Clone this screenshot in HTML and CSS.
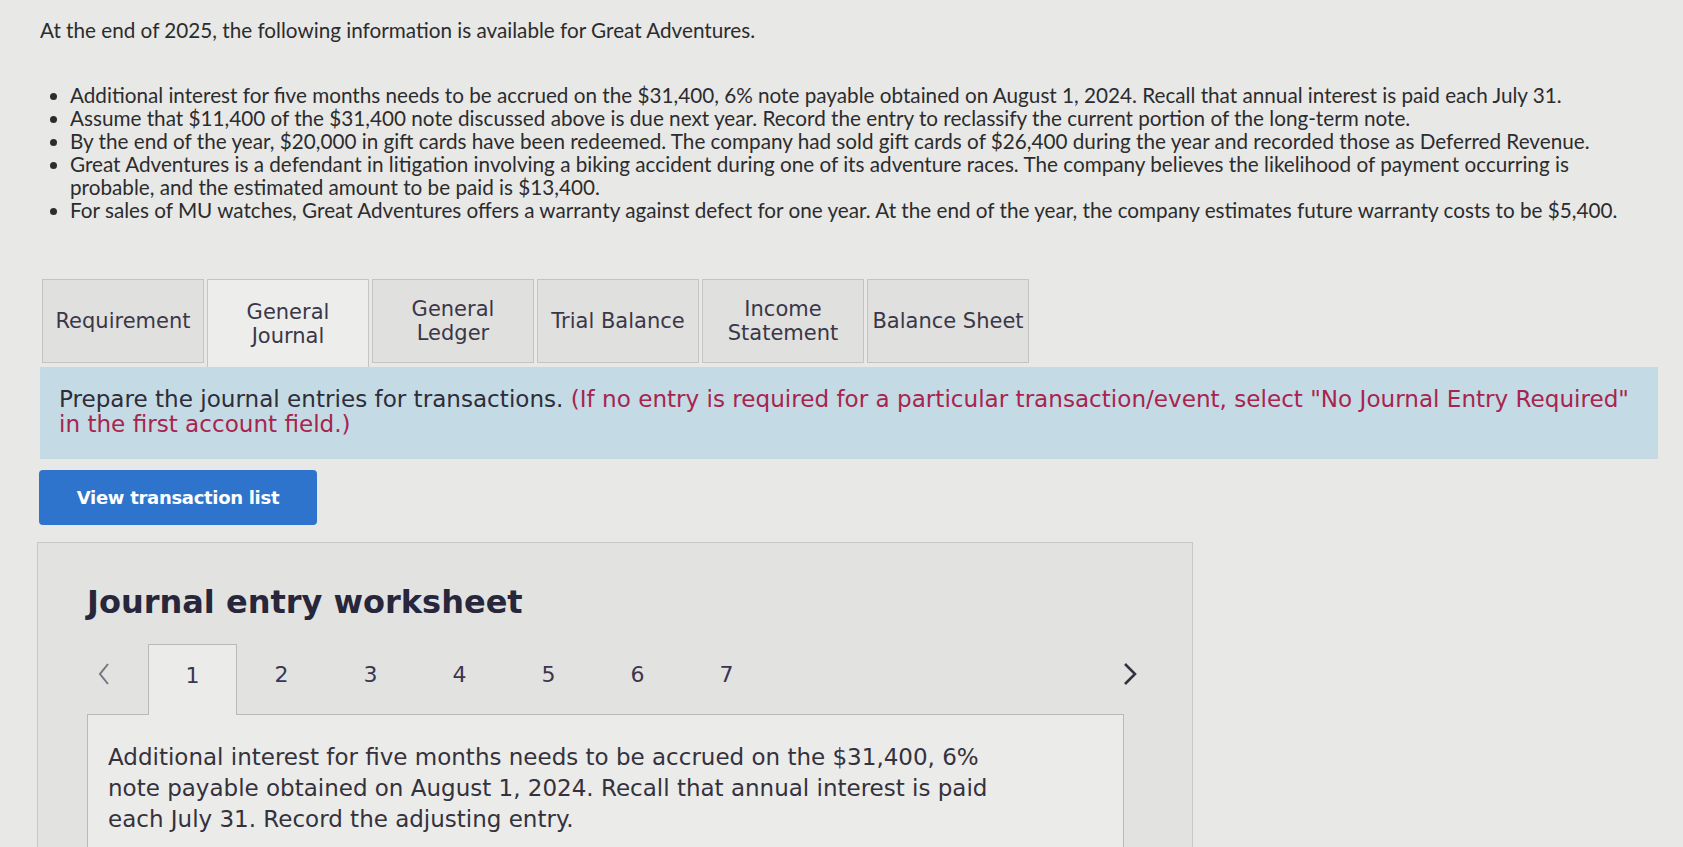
FILE: index.html
```html
<!DOCTYPE html>
<html lang="en">
<head>
<meta charset="utf-8">
<title>Great Adventures</title>
<link rel="stylesheet" href="styles.css">
</head>
<body>
<div class="intro">
  <p class="lead">At the end of 2025, the following information is available for Great Adventures.</p>
  <ul class="facts">
    <li>Additional interest for five months needs to be accrued on the $31,400, 6% note payable obtained on August 1, 2024. Recall that annual interest is paid each July 31.</li>
    <li>Assume that $11,400 of the $31,400 note discussed above is due next year. Record the entry to reclassify the current portion of the long-term note.</li>
    <li>By the end of the year, $20,000 in gift cards have been redeemed. The company had sold gift cards of $26,400 during the year and recorded those as Deferred Revenue.</li>
    <li>Great Adventures is a defendant in litigation involving a biking accident during one of its adventure races. The company believes the likelihood of payment occurring is probable, and the estimated amount to be paid is $13,400.</li>
    <li>For sales of MU watches, Great Adventures offers a warranty against defect for one year. At the end of the year, the company estimates future warranty costs to be $5,400.</li>
  </ul>
</div>

<div class="tabs">
  <div class="tab">Requirement</div>
  <div class="tab active">General<br>Journal</div>
  <div class="tab">General<br>Ledger</div>
  <div class="tab">Trial Balance</div>
  <div class="tab">Income<br>Statement</div>
  <div class="tab">Balance Sheet</div>
</div>

<div class="instructions">
  <span>Prepare the journal entries for transactions.</span> <span class="note">(If no entry is required for a particular transaction/event, select "No Journal Entry Required"</span><br><span class="note">in the first account field.)</span>
</div>

<button class="view-btn" type="button">View transaction list</button>

<section class="worksheet">
  <h2 class="ws-title">Journal entry worksheet</h2>
  <div class="ws-nav">
    <span class="arrow prev"><svg width="12" height="24" viewBox="0 0 12 24"><polyline points="10,2 2,12 10,22" fill="none" stroke="#77737f" stroke-width="2"/></svg></span>
    <span class="step current">1</span>
    <span class="step">2</span>
    <span class="step">3</span>
    <span class="step">4</span>
    <span class="step">5</span>
    <span class="step">6</span>
    <span class="step">7</span>
    <span class="arrow next"><svg width="14" height="24" viewBox="0 0 14 24"><polyline points="2,2 12,12 2,22" fill="none" stroke="#35323f" stroke-width="2.6"/></svg></span>
  </div>
  <div class="ws-body">
    <p class="ws-text">Additional interest for five months needs to be accrued on the $31,400, 6% note payable obtained on August 1, 2024. Recall that annual interest is paid each July 31. Record the adjusting entry.</p>
  </div>
</section>
</body>
</html>
```

FILE: styles.css
```css
* { box-sizing: border-box; }

html, body {
  margin: 0;
  height: 100%;
  overflow: hidden;
}

body {
  background: #e8e8e6;
  color: #2e2e32;
  padding: 0 25px 0 40px;
  font-family: "DejaVu Sans", Verdana, sans-serif;
}

.intro {
  font-family: Lato, "Liberation Sans", sans-serif;
  font-size: 20.7px;
  line-height: 23px;
  color: #2c2c2e;
  padding-top: 19px;
}

.lead {
  margin: 0;
}

.facts {
  margin: 42px 0 0 0;
  padding-left: 30px;
  padding-right: 20px;
}

.tabs {
  display: flex;
  gap: 3px;
  margin: 57px 0 0 2px;
  align-items: flex-start;
}

.tab {
  width: 162px;
  height: 84px;
  background: #e0e0df;
  border: 1px solid #c4c4c4;
  display: flex;
  align-items: center;
  justify-content: center;
  text-align: center;
  font-size: 21px;
  line-height: 24px;
  color: #3b3748;
}

.tab.active {
  background: #ededec;
  height: 88px;
  border-bottom: none;
}

.instructions {
  width: 1618px;
  background: #c4dbe5;
  padding: 20px 19px 22px 19px;
  font-size: 23.1px;
  line-height: 25px;
  color: #2f2d38;
}

.note {
  color: #a8244f;
}

.view-btn {
  display: block;
  margin: 11px 0 0 -1px;
  width: 278px;
  height: 55px;
  border: none;
  border-radius: 4px;
  background: #2e74cd;
  color: #ffffff;
  font-family: "DejaVu Sans", Verdana, sans-serif;
  font-weight: bold;
  font-size: 18px;
  letter-spacing: -0.3px;
}

.worksheet {
  margin: 17px 0 0 -3px;
  width: 1156px;
  height: 400px;
  background: #e2e2e1;
  border: 1px solid #c8c8c8;
  padding: 40px 0 0 21px;
}

.ws-title {
  margin: 0 0 0 28px;
  font-size: 32px;
  line-height: 38px;
  font-weight: bold;
  color: #28263a;
}

.ws-nav {
  display: flex;
  align-items: stretch;
  height: 70px;
  margin-top: 23px;
  width: 1115px;
}

.step, .arrow {
  width: 89px;
  display: flex;
  align-items: center;
  justify-content: center;
  font-size: 22px;
  color: #3a3650;
  padding-bottom: 10px;
}

.step.current {
  background: #ebebea;
  border: 1px solid #b9b9b9;
  border-bottom: none;
  position: relative;
  z-index: 1;
  margin-bottom: -1px;
}

.arrow.next {
  margin-left: auto;
}

.ws-body {
  margin-left: 28px;
  width: 1037px;
  height: 200px;
  background: #ebebea;
  border: 1px solid #b9b9b9;
  padding: 27px 0 0 20px;
}

.ws-text {
  margin: 0;
  width: 900px;
  font-size: 23px;
  line-height: 31px;
  color: #34323c;
}
```
